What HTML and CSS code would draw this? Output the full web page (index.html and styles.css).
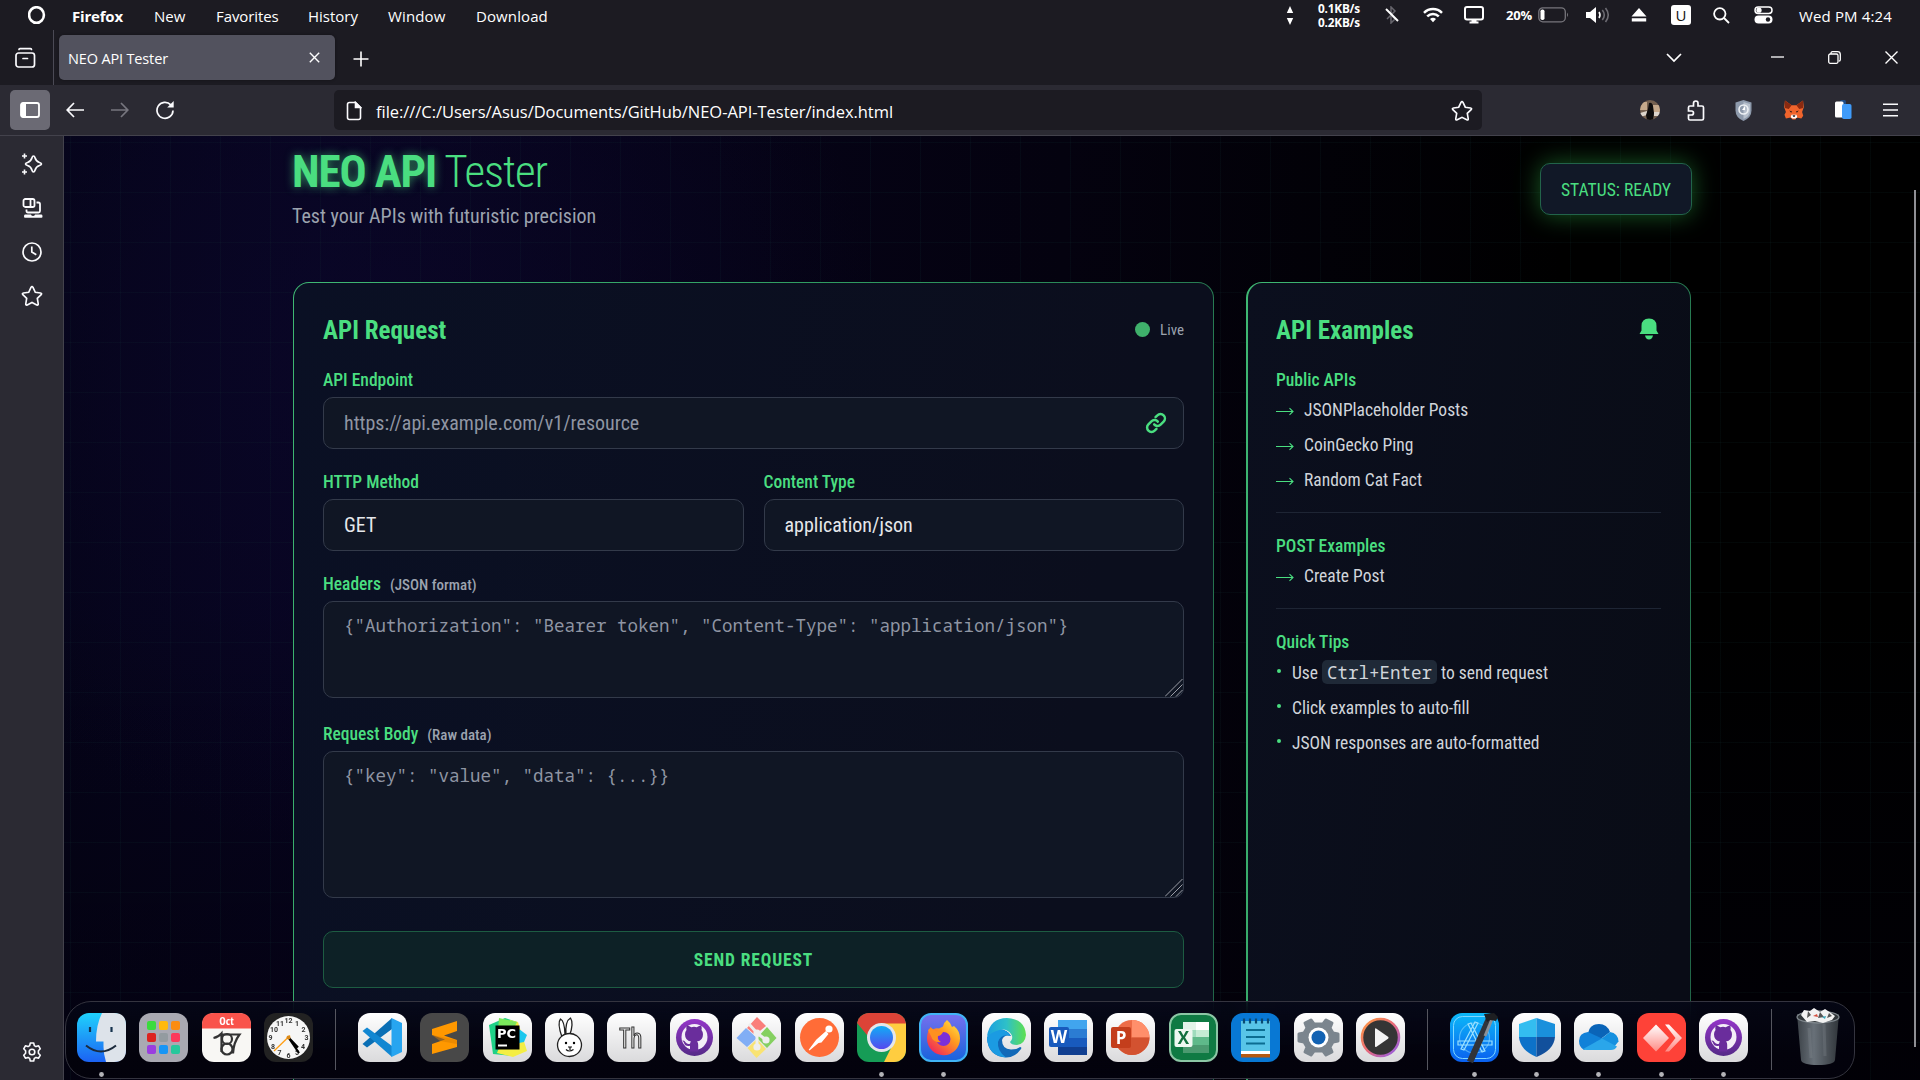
FILE: index.html
```html
<!DOCTYPE html>
<html lang="en">
<head>
<meta charset="utf-8">
<title>NEO API Tester</title>
<link rel="stylesheet" href="styles.css">
</head>
<body>
<header class="menubar">
  <svg class="logo" width="18" height="20" viewBox="0 0 18 20"><ellipse cx="8.500" cy="9" rx="7.4" ry="7.8" fill="none" stroke="#fff" stroke-width="2.6"/></svg>
  <nav class="menus"><b class="m1">Firefox</b><span class="m2">New</span><span class="m3">Favorites</span><span class="m4">History</span><span class="m5">Window</span><span class="m6">Download</span></nav>
  <div class="tray">
    <svg class="t-arrows" width="8" height="20" viewBox="0 0 8 20" fill="#fff"><path d="M4 1l3.200 7H.8zM4 20l3.200-7H.8z"/></svg>
    <div class="speed"><span>0.1KB/s</span><span>0.2KB/s</span></div>
    <svg class="t-bt" width="14" height="18" viewBox="0 0 14 18" fill="none"><path d="M2 13l8-8-4-4v16l4-4-3-3" stroke="#66656c" stroke-width="1.5"/><path d="M1 3l12 12" stroke="#fff" stroke-width="1.9"/></svg>
    <svg class="t-wifi" width="20" height="16" viewBox="0 0 20 16" fill="none" stroke="#fff" stroke-width="2.5"><path d="M1 5.8c5-5 13-5 18 0M4.2 9.4c3.4-3.3 8.200-3.3 11.600 0"/><path d="M7 12a4.500 4.500 0 0 1 6 0l-3 3.300z" fill="#fff" stroke="none"/></svg>
    <svg class="t-mon" width="20" height="18" viewBox="0 0 20 18"><rect x="1" y="1" width="18" height="12.500" rx="2" fill="none" stroke="#fff" stroke-width="2"/><path d="M7.500 13h5v2.500h2V17.500h-9v-2h2z" fill="#fff"/></svg>
    <b class="pct">20%</b>
    <svg class="t-bat" width="32" height="16" viewBox="0 0 32 16"><rect x=".8" y=".8" width="26.500" height="14" rx="4" fill="none" stroke="#77767c" stroke-width="1.300"/><rect x="2.500" y="2.500" width="4" height="10.600" rx="1.800" fill="#fff"/><path d="M29 5.500q2 2.300 0 4.600z" fill="#77767c"/></svg>
    <svg class="t-vol" width="24" height="16" viewBox="0 0 24 16" fill="none"><path d="M0 5h4l6-5v16l-6-5H0z" fill="#fff"/><path d="M13 5q2 3 0 6" stroke="#fff" stroke-width="1.600"/><path d="M16.300 3q4 5 0 10M19.500 1q5.500 7 0 14" stroke="#6c6b72" stroke-width="1.600"/></svg>
    <svg class="t-ej" width="16" height="14" viewBox="0 0 16 14" fill="#fff"><path d="M8 0l7.500 8.500H.5zM.8 10.300h14.400v3.200H.8z"/></svg>
    <span class="ubox">U</span>
    <svg class="t-find" width="17" height="17" viewBox="0 0 17 17" fill="none" stroke="#fff" stroke-width="1.800"><circle cx="6.800" cy="6.800" r="5.700"/><path d="M11 11l5 5"/></svg>
    <svg class="t-cc" width="19" height="18" viewBox="0 0 19 18"><rect x="1" y="1" width="17" height="6.500" rx="3.200" fill="none" stroke="#fff" stroke-width="1.500"/><circle cx="5" cy="4.200" r="2.600" fill="#fff"/><rect x=".5" y="9.500" width="18" height="8" rx="4" fill="#fff"/><circle cx="14" cy="13.500" r="2.200" fill="#1c1b22"/></svg>
    <span class="time">Wed PM 4:24</span>
  </div>
</header>
<div class="tabs">
  <div class="view"><svg width="22" height="22" viewBox="0 0 22 22" fill="none" stroke="#fbfbfe" stroke-width="1.700" stroke-linecap="round"><rect x="2" y="6" width="18.500" height="14" rx="2.500"/><path d="M5 2.500q0-.8 1-.8h10.500q1 0 1 .8M9 11.500h4.500"/></svg></div>
  <div class="tab"><span>NEO API Tester</span><svg width="11" height="11" viewBox="0 0 11 11" stroke="#fff" stroke-width="1.400"><path d="M.8.8l9.400 9.400M10.200.8L.8 10.200"/></svg></div>
  <svg class="plus" width="16" height="16" viewBox="0 0 16 16" stroke="#fff" stroke-width="1.600"><path d="M8 .5v15M.5 8h15"/></svg>
  <div class="winbtns">
    <svg width="16" height="10" viewBox="0 0 16 10" fill="none" stroke="#fff" stroke-width="1.700"><path d="M1 1l7 7 7-7"/></svg>
    <svg class="min" width="13" height="13" viewBox="0 0 13 13" stroke="#fff" stroke-width="1.300"><path d="M0 6h13"/></svg>
    <svg class="rest" width="13" height="13" viewBox="0 0 13 13" fill="none" stroke="#fff" stroke-width="1.300"><rect x=".7" y="3" width="9.300" height="9.300" rx="1.500"/><path d="M3 3V2.300Q3 .7 4.500.7h5q2.800 0 2.800 2.800v5.200q0 1.300-1.500 1.500"/></svg>
    <svg class="cls" width="13" height="13" viewBox="0 0 13 13" stroke="#fff" stroke-width="1.400"><path d="M.5.5l12 12M12.500.5l-12 12"/></svg>
  </div>
</div>
<div class="toolbar">
  <div class="sidebtn"><svg width="20" height="16" viewBox="0 0 20 16"><rect x="1" y="1" width="18" height="14" rx="2" fill="none" stroke="#fff" stroke-width="1.800"/><path d="M1 2h5v12H1z" fill="#fff"/></svg></div>
  <svg class="back" width="18" height="16" viewBox="0 0 18 16" fill="none" stroke="#fbfbfe" stroke-width="1.700"><path d="M18 8H1.500M8 1L1.200 8 8 15"/></svg>
  <svg class="fwd" width="18" height="16" viewBox="0 0 18 16" fill="none" stroke="#77767f" stroke-width="1.700"><path d="M0 8h16.500M10 1l6.800 7L10 15"/></svg>
  <svg class="reload" width="20" height="20" viewBox="0 0 20 20" fill="none" stroke="#fbfbfe" stroke-width="1.700"><path d="M15.800 4.800A8 8 0 1 0 18 10.500"/><path d="M18.700 1v6.500h-6.500z" fill="#fbfbfe" stroke="none"/></svg>
  <div class="url">
    <svg width="16" height="20" viewBox="0 0 16 20" fill="none" stroke="#fbfbfe" stroke-width="1.600"><path d="M3.500 1.500h6l5 5v10q0 2-2 2h-9q-2 0-2-2v-13q0-2 2-2z"/><path d="M9.500 1.500v5h5z" fill="#fbfbfe"/></svg>
    <span>file:///C:/Users/Asus/Documents/GitHub/NEO-API-Tester/index.html</span>
    <svg class="star" width="22" height="21" viewBox="0 0 24 23"><use href="#star"/></svg>
  </div>
  <div class="exts">
    <svg width="20" height="20" viewBox="0 0 20 20"><clipPath id="pc"><circle cx="10" cy="10" r="10"/></clipPath><g clip-path="url(#pc)"><path fill="#75604f" d="M0 0h20v20H0z"/><path fill="#c6a98b" d="M0 2h7v8H0zM13 5h7v7h-7z"/><path fill="#ddd5cb" d="M0 13l7-2v4l-7 2zM14 12h6v4h-6z"/><path fill="#0e0c0c" d="M9 3q3-1 4 3l1 7-1 7H7l-1-5 2-6z"/></g></svg>
    <svg class="e2" width="18" height="21" viewBox="0 0 18 21" fill="none" stroke="#fbfbfe" stroke-width="1.700"><path d="M6.500 6V3.500q0-2.500 2.300-2.500T11 3.500V6h4q1.500 0 1.500 1.500V18.500q0 1.500-1.500 1.500H3q-1.500 0-1.500-1.500V15h3q2 0 2-2t-2-2h-3V7.500Q1.500 6 3 6z"/></svg>
    <svg class="e3" width="17" height="21" viewBox="0 0 17 21"><path d="M8.500 0l8 2.500v8q0 7-8 10.500-8-3.500-8-10.500v-8z" fill="#8e9aac"/><path d="M8.500 2L15 4v7q0 5-6.500 8z" fill="#b7c0cd"/><circle cx="8.500" cy="9.500" r="4.500" fill="none" stroke="#eef1f5" stroke-width="1.600"/><path d="M7 10l3-4v4z" fill="#fff"/></svg>
    <svg class="e4" width="20" height="20" viewBox="0 0 21 20"><path fill="#f0642c" d="M1 0l7 5h5l7-5 .8 7-1.800 5 1.200 4-2 3-5-1.200L12 20H9l-2.200-2.200L2 19l-1.500-4L2 12 .2 7z"/><path fill="#8b2a10" d="M1 0l7 5-3 4-4-1zM20 0l-7 5 3 4 4-1z"/><path fill="#fff" d="M8 15h5l1 2.500-2 1.500H9l-2-1.500z"/><path fill="#2a1a18" d="M5.500 10.500l3 1-1 1.500zM15.500 10.500l-3 1 1 1.500zM9 15.500h3l-.5 1.500h-2z"/></svg>
    <svg class="e5" width="17" height="20" viewBox="0 0 17 20"><rect x="5" y="0" width="6" height="5" rx="1.500" fill="#1d4a86"/><rect x="0" y="1.500" width="8.500" height="16" rx="1.500" fill="#fff"/><rect x="7" y="4" width="9.500" height="15" rx="1.800" fill="#3f9bfa"/></svg>
    <svg class="e6" width="17" height="14" viewBox="0 0 17 14" stroke="#fbfbfe" stroke-width="1.600"><path d="M1 1.200h15M1 7h15M1 12.800h15"/></svg>
  </div>
</div>
<div class="main">
  <aside class="side">
    <svg width="22" height="22" viewBox="0 0 22 22" fill="none" stroke="#fbfbfe" stroke-width="1.700" stroke-linejoin="round"><path d="M12.500 3q1 0 1.500 1.800.9 3.500 4.500 4.700 2 .6 2 1.500t-2 1.500q-3.600 1.200-4.500 4.700Q13.500 19 12.500 19T11 17.200q-.9-3.500-4.500-4.700-2-.6-2-1.500t2-1.500Q10.100 8.300 11 4.800 11.500 3 12.500 3z"/><path d="M3.500.5v5M1 3h5M3.500 16.500v5M1 19h5" stroke-width="1.600"/></svg>
    <svg width="22" height="22" viewBox="0 0 22 22" fill="none" stroke="#fbfbfe" stroke-width="1.800"><rect x="2.500" y="2" width="11" height="8" rx="1.800"/><path d="M9.500 2v8M15.500 5.500h1.800q1.700 0 1.700 1.800V14q0 1.500-1.500 1.500H7Q5.500 15.500 5.500 14v-1.500"/><path d="M4 17.500h6q0 1.400 2 1.400t2-1.400h6.500q1 0 1 2 0 1.300-1 1.300H4q-1 0-1-1.300 0-2 1-2z" fill="#fbfbfe" stroke="none"/></svg>
    <svg width="22" height="22" viewBox="0 0 22 22" fill="none" stroke="#fbfbfe" stroke-width="1.700"><circle cx="11" cy="11" r="9"/><path d="M10.800 5.500V11l4.500 2.700"/></svg>
    <svg width="22" height="22" viewBox="0 0 24 24"><path id="star" d="M12 1.800q.7 0 1.100.9l2.500 5.200 5.700.8q1.900.4.700 1.900l-4.200 4 1 5.900q.2 1.900-1.600 1.200L12 19l-5.200 2.700q-1.800.7-1.600-1.200l1-5.900-4.200-4Q.8 9.100 2.700 8.700l5.700-.8 2.500-5.200q.4-.9 1.100-.9z" fill="none" stroke="#fbfbfe" stroke-width="1.800"/></svg>
    <svg class="gear" width="20" height="20" viewBox="0 0 20 20" fill="none" stroke="#fbfbfe" stroke-width="1.600" stroke-linejoin="round"><path d="M8.300 1h3.400l.6 2.600 1.700 1 2.600-.8 1.700 3-1.900 1.900v2.600l1.900 1.900-1.700 3-2.600-.8-1.700 1-.6 2.600H8.300l-.6-2.600-1.700-1-2.600.8-1.700-3 1.900-1.900V8.700L1.700 6.800l1.700-3 2.600.8 1.700-1z"/><circle cx="10" cy="10" r="2.800"/></svg>
  </aside>
  <div class="page">
    <div class="wrap">
      <div class="hero">
        <div><h1><b>NEO API</b> <span>Tester</span></h1><p>Test your APIs with futuristic precision</p></div>
        <div class="status">STATUS: READY</div>
      </div>
      <div class="cols">
        <section class="card req">
          <div class="head"><h2>API Request</h2><span class="live"><i></i>Live</span></div>
          <div class="field"><label>API Endpoint</label>
            <div class="holder"><input class="box" placeholder="https://api.example.com/v1/resource">
              <svg class="link" width="22" height="22" viewBox="0 0 24 24" fill="none" stroke="#4ade80" stroke-width="2.700" stroke-linecap="round"><path d="M10 13.500a4.800 4.800 0 0 0 7 .3l3.300-3.300a4.700 4.700 0 0 0-6.800-6.800L11.500 5.600"/><path d="M14 10.500a4.800 4.800 0 0 0-7-.3l-3.300 3.300a4.700 4.700 0 0 0 6.800 6.800l2-1.900"/></svg></div></div>
          <div class="two">
            <div class="field"><label>HTTP Method</label><select class="box"><option>GET</option></select></div>
            <div class="field"><label>Content Type</label><select class="box"><option>application/json</option></select></div>
          </div>
          <div class="field big"><label>Headers <small>(JSON format)</small></label>
            <div class="holder"><textarea class="box area a1" placeholder='{"Authorization": "Bearer token", "Content-Type": "application/json"}'></textarea><svg class="grip" width="18" height="18" viewBox="0 0 18 18" stroke="#9a9ca5" stroke-width="1"><path d="M0 17.500L17.500 0M5.500 17.500l12-12M11 17.500l6.500-6.500"/></svg></div></div>
          <div class="field big"><label>Request Body <small>(Raw data)</small></label>
            <div class="holder"><textarea class="box area a2" placeholder='{"key": "value", "data": {...}}'></textarea><svg class="grip" width="18" height="18" viewBox="0 0 18 18" stroke="#9a9ca5" stroke-width="1"><path d="M0 17.500L17.500 0M5.500 17.500l12-12M11 17.500l6.500-6.500"/></svg></div></div>
          <button class="send">SEND REQUEST</button>
        </section>
        <section class="card ex">
          <div class="head"><h2>API Examples</h2><svg width="20" height="22" viewBox="0 0 20 22" fill="#4ade80"><path d="M10 .5q7.500 0 7.500 7.500v4.500L19.500 16H.5l2-3.500V8q0-7.500 7.500-7.500zM6 17.500h8q-.8 4-4 4t-4-4z"/></svg></div>
          <h3>Public APIs</h3>
          <ul class="arrows">
            <li><svg width="18" height="10" viewBox="0 0 18 10"><use href="#arr"/></svg>JSONPlaceholder Posts</li>
            <li><svg width="18" height="10" viewBox="0 0 18 10"><path id="arr" d="M0 5.500h17M13.500 2.200L17 5.500l-3.500 3.300" fill="none" stroke="#4ade80" stroke-width="1.100"/></svg>CoinGecko Ping</li>
            <li><svg width="18" height="10" viewBox="0 0 18 10"><use href="#arr"/></svg>Random Cat Fact</li>
          </ul>
          <hr>
          <h3>POST Examples</h3>
          <ul class="arrows"><li><svg width="18" height="10" viewBox="0 0 18 10"><use href="#arr"/></svg>Create Post</li></ul>
          <hr>
          <h3>Quick Tips</h3>
          <ul class="dots"><li><i></i><span>Use <code>Ctrl+Enter</code> to send request</span></li><li><i></i>Click examples to auto-fill</li><li><i></i>JSON responses are auto-formatted</li></ul>
        </section>
      </div>
    </div>
  </div>
</div>
<div class="scroll"></div>

<svg width="0" height="0" class="defs">
  <defs>
    <linearGradient id="wh" x2="0" y2="1"><stop stop-color="#fff"/><stop offset="1" stop-color="#dadadc"/></linearGradient>
    <linearGradient id="fin" x2="0" y2="1"><stop stop-color="#1fd2fc"/><stop offset="1" stop-color="#1c62f3"/></linearGradient>
    <linearGradient id="ffb" x2="0" y2="1"><stop stop-color="#7770ee"/><stop offset="1" stop-color="#1763dc"/></linearGradient>
    <linearGradient id="flame" x1="1" x2=".2" y2="1"><stop stop-color="#fff04a"/><stop offset=".45" stop-color="#ff9a1f"/><stop offset="1" stop-color="#f0215d"/></linearGradient>
    <linearGradient id="edg" y2="0"><stop stop-color="#1a9fe0"/><stop offset=".5" stop-color="#2ec0c8"/><stop offset="1" stop-color="#5fe04e"/></linearGradient>
    <linearGradient id="pur" x2="0" y2="1"><stop stop-color="#9435c8"/><stop offset="1" stop-color="#552a88"/></linearGradient>
    <linearGradient id="cb" x2="0" y2="1"><stop stop-color="#10adf6"/><stop offset="1" stop-color="#5548ef"/></linearGradient>
    <linearGradient id="xc" x2="0" y2="1"><stop stop-color="#0bb9f8"/><stop offset="1" stop-color="#0a60f0"/></linearGradient>
    <linearGradient id="ring" x2="1" y2="1"><stop stop-color="#ff9a3e"/><stop offset=".5" stop-color="#e86a7a"/><stop offset="1" stop-color="#8b5cf0"/></linearGradient>
    <linearGradient id="can" y2="0"><stop stop-color="#3c4248"/><stop offset=".4" stop-color="#687078"/><stop offset="1" stop-color="#30353a"/></linearGradient>
    <linearGradient id="any" x2="0" y2="1"><stop stop-color="#fff"/><stop offset="1" stop-color="#ff8b85"/></linearGradient>
    <symbol id="base" viewBox="0 0 49 49"><rect width="49" height="49" rx="12" fill="url(#wh)"/></symbol>
    <symbol id="gh" viewBox="0 0 49 49"><rect width="49" height="49" rx="12" fill="url(#wh)"/><circle cx="24.500" cy="24.500" r="18.500" fill="url(#pur)"/><circle cx="24.500" cy="24" r="13" fill="#f3eef7"/><path d="M20 38.500v-5.800q-5 1-6-3-.7-1.300-1.700-2 2-.6 3.400 1.800 1.500 2 4.300 1.200.2-1.500 1-2.200-6-1-6-7.300 0-2.500 1.500-4.200-.6-2 .3-4.600 2 0 4.500 1.800 2.700-.8 5.400 0 2.500-1.800 4.500-1.800.9 2.600.3 4.600 1.500 1.700 1.500 4.200 0 6.300-6 7.300 1.200 1 1.200 3.200v6.800z" fill="#6a2d9c"/></symbol>
    <circle id="run" cx="24.500" cy="61.500" r="2.400" fill="#b4b4b8"/>
  </defs>
</svg>
<div class="dock">
  <svg viewBox="0 0 49 49"><rect width="49" height="49" rx="12" fill="url(#fin)"/><path d="M25 0h12q12 0 12 12v25q0 12-12 12h-8q-2.500-8-2.500-15v-5.500H19Q19 12 25 0z" fill="#dde3ea"/><path d="M13 14v5M34.500 14v5" stroke="#15324e" stroke-width="2.200"/><path d="M9 32.500q15 12 30 0" fill="none" stroke="#1c2b3d" stroke-width="2"/><use href="#run"/></svg>
  <svg viewBox="0 0 49 49"><rect width="49" height="49" rx="12" fill="#a9a9b2"/><rect x="8" y="8" width="9" height="9" rx="2" fill="#3bdb3d"/><rect x="20" y="8" width="9" height="9" rx="2" fill="#ffb90c"/><rect x="32" y="8" width="9" height="9" rx="2" fill="#fb8c12"/><rect x="8" y="20" width="9" height="9" rx="2" fill="#dc221f"/><rect x="20" y="20" width="9" height="9" rx="2" fill="#939ba0"/><rect x="32" y="20" width="9" height="9" rx="2" fill="#fb3a5c"/><rect x="8" y="32" width="9" height="9" rx="2" fill="#9a3ee0"/><rect x="20" y="32" width="9" height="9" rx="2" fill="#1795f5"/><rect x="32" y="32" width="9" height="9" rx="2" fill="#27c79c"/></svg>
  <svg viewBox="0 0 49 49"><rect width="49" height="49" rx="12" fill="#f8f7f4"/><path d="M0 15.500V12Q0 0 12 0h25q12 0 12 12v3.500z" fill="#f9534b"/><text x="24.500" y="12" text-anchor="middle" class="cal">Oct</text><g fill="none" stroke="#333" stroke-width="2.200"><path d="M11.500 25q5-1 8-4.500v18.500"/><circle cx="25" cy="26" r="5"/><circle cx="25" cy="36" r="5.500"/><path d="M20 21.500h17.500q-6 8-6.500 19"/></g></svg>
  <svg viewBox="0 0 49 49"><rect width="49" height="49" rx="12" fill="#222"/><circle cx="24.500" cy="24.500" r="21.500" fill="#f6f6f6"/><g class="clk" text-anchor="middle"><text x="24.500" y="10">12</text><text x="33" y="12.500">1</text><text x="39.500" y="18.500">2</text><text x="42.500" y="27">3</text><text x="39" y="36">4</text><text x="33" y="42">5</text><text x="24.500" y="45">6</text><text x="15.500" y="42">7</text><text x="9" y="36">8</text><text x="6.500" y="27">9</text><text x="10" y="18.500">10</text><text x="16" y="12.500">11</text></g><path d="M24.500 24.500l9.500 10M24.500 24.500L35 40" stroke="#000" stroke-width="2.200"/><path d="M26 22.500L10 38" stroke="#ff9d13" stroke-width="1.300"/><circle cx="24.500" cy="24.500" r="2" fill="#d98a1c"/></svg>
  <span class="sep"></span>
  <svg viewBox="0 0 49 49"><use href="#base"/><path d="M34 5v11L9 34.500l-4.500-3.500z" fill="#0a6fb5"/><path d="M34 44V33L9 14.500 4.500 18z" fill="#1287d2"/><path d="M33.500 5L44 10v29l-10.500 5z" fill="#27a5f0"/></svg>
  <svg viewBox="0 0 49 49"><rect width="49" height="49" rx="12" fill="#484848"/><path d="M37 8v10l-13 4.500 13 4.500v7L12 41V31l13-4.500L12 22v-6z" fill="#ff9800"/><path d="M12 22l25 5v4L20 28z" fill="#d97c00" opacity=".5"/></svg>
  <svg viewBox="0 0 49 49"><use href="#base"/><path fill="#1fd187" d="M6 12L22 5l12 4-4 34-20-2z"/><path fill="#f4ee44" d="M27 7l8 2 9 29-14 6-16-4z"/><path fill="#1bc7ee" d="M36 16l8 6-3 7-5 1z"/><path fill="#7be85c" d="M16 5l18 4-3 6-16 2z"/><path d="M12.500 12.500h24v24h-24z"/><text x="14" y="25" class="pyc">PC</text><path d="M15 31.500h9v2h-9z" fill="#fff"/></svg>
  <svg viewBox="0 0 49 49"><use href="#base"/><g fill="#fff" stroke="#222" stroke-width="1.300"><path d="M17 24Q12 10 15.500 6q4 2 4.500 15zM21 22Q20 8 25.500 5q3.500 5-1 18z"/><ellipse cx="24.500" cy="32" rx="12" ry="11.500"/></g><circle cx="21" cy="30" r="1.200"/><circle cx="29" cy="30" r="1.200"/><path d="M25 34v3M21 36.500q3 3 7.500 0M23 34h4" fill="none" stroke="#111" stroke-width="1.200"/></svg>
  <svg viewBox="0 0 49 49"><use href="#base"/><text x="24" y="35" text-anchor="middle" class="th">Th</text></svg>
  <svg viewBox="0 0 49 49"><use href="#gh"/></svg>
  <svg viewBox="0 0 49 49"><use href="#base"/><path fill="#fa7e7a" d="M25 4l9 9-11 9-8-7z"/><path fill="#81aef5" d="M14 15l11 10-10 9L4.500 25z"/><path fill="#85d060" d="M35 14l9.500 11L35 35l-10-10z"/><path fill="#f9e373" d="M25 26l9 10-9.500 9-9-10z"/><path d="M17 11l8 9v16M25 20l9 7" fill="none" stroke="#eee" stroke-width="3"/><g fill="#eee"><circle cx="25" cy="20" r="3.600"/><circle cx="25" cy="34" r="3.600"/><circle cx="34" cy="27" r="3.600"/></g></svg>
  <svg viewBox="0 0 49 49"><use href="#base"/><circle cx="24.500" cy="24.500" r="19.500" fill="#ff6c37"/><circle cx="34" cy="16" r="3.600" fill="#fff"/><path d="M31 18l2.500 3-7 8.500-3 .5-9 7.500-.8-.8 7.500-10z" fill="#fff"/></svg>
  <svg viewBox="0 0 49 49"><clipPath id="cc"><rect width="49" height="49" rx="12"/></clipPath><g clip-path="url(#cc)"><path fill="#169c56" d="M0 0h49v49H0z"/><path fill="#ffcd40" d="M24 10h25v39H27l9-18z"/><path fill="#dc4337" d="M0 0h49v10.500H24L15 28 0 10z"/></g><circle cx="24.500" cy="24.500" r="14.500" fill="#e4e6ea"/><circle cx="24.500" cy="24.500" r="11.500" fill="url(#cb)"/><use href="#run"/></svg>
  <svg viewBox="0 0 49 49"><rect x="1" y="1" width="47" height="47" rx="11" fill="url(#ffb)" stroke="#41b4f5" stroke-width="2"/><path fill="url(#flame)" d="M28 7q4 3 5 7l2-1q6 5 6 12.500A16.500 16.500 0 0 1 8 26q0-7 3.500-12l2.500 2.500q3-2 6-1l4-2q1-4.500 4-6.500z"/><circle cx="24.500" cy="26" r="7" fill="#7a2fd8"/><path fill="#ff9020" d="M9 17l3-2 5 3 7 1q-2 4-5 4-1 4 3 6-8 1-10-6z"/><use href="#run"/></svg>
  <svg viewBox="0 0 49 49"><use href="#base"/><path fill="#1169b8" d="M5 25q2-9 12-9 9 1 12 7-7-2-9 4 0 9 9 9.500 6 0 9-2.500 2 0 1 2-6 8.500-14.500 8.500Q6 43.500 5 25z"/><path fill="#1b9be2" d="M5 25q2-9 12-9 9 1 12 7-10-3-13 6-1 9 8 15.500Q6 43 5 25z"/><path fill="url(#edg)" d="M5 23Q8 5 25 5q18 1 19 17-1 9-9 10-6 0-7-3 4-4 1-8Q22 11 5 23z"/></svg>
  <svg viewBox="0 0 49 49"><use href="#base"/><path fill="#41a5ee" d="M14 7h29v9H14z"/><path fill="#2b7cd3" d="M14 16h29v9H14z"/><path fill="#185abd" d="M14 25h29v9H14z"/><path fill="#103f91" d="M14 34h29v8H14z"/><rect x="5" y="14" width="20" height="20" rx="2" fill="#185abd"/><text x="15" y="30" text-anchor="middle" class="off">W</text></svg>
  <svg viewBox="0 0 49 49"><use href="#base"/><circle cx="26" cy="24.500" r="17.500" fill="#ed6c47"/><path fill="#ff8f6b" d="M26 7a17.500 17.500 0 0 1 17.500 17.500H26z"/><path fill="#d35230" d="M43.500 24.500a17.500 17.500 0 0 1-35 0z"/><rect x="5" y="14" width="20" height="21" rx="2" fill="#c43e1c"/><text x="15" y="30.500" text-anchor="middle" class="off">P</text></svg>
  <svg viewBox="0 0 49 49"><rect x="1" y="1" width="47" height="47" rx="11" fill="#0f7a43" stroke="#8cc7a5" stroke-width="2"/><path fill="#e3f4e9" d="M14 9h13v8H14z"/><path fill="#fff" d="M27 9h13v8H27z"/><path fill="#9fdcbd" d="M14 17h26v7H14z"/><path fill="#c6ecd5" d="M27 17h13v7H27z"/><path fill="#5fb98a" d="M14 24h26v8H14z"/><path fill="#4b9a70" d="M14 32h26v8H14z"/><rect x="5.500" y="16" width="18" height="18" rx="2" fill="#eef8f1"/><text x="14.500" y="31" text-anchor="middle" class="off xl">X</text></svg>
  <svg viewBox="0 0 49 49"><rect width="49" height="49" rx="12" fill="#0878d4"/><path fill="#58c5e8" d="M10 8h29v32H10z"/><path fill="#fff" d="M10 38h29v3H10z"/><path fill="#b55a13" d="M10 41h29v3.500H10z"/><path d="M15 17h19M15 24h19M15 30.500h19" stroke="#0b6d91" stroke-width="2"/><path d="M13 5.500v5M19 5.500v5M25 5.500v5M31 5.500v5M37 5.500v5" stroke="#0a4a72" stroke-width="2.200"/></svg>
  <svg viewBox="0 0 49 49"><use href="#base"/><path fill="#7b858e" stroke="#7b858e" stroke-width="3" stroke-linejoin="round" d="M20 11l-3-4-6 3 2 5-3 5-5 1v7l5 1 3 5-2 5 6 3 3-4h9l3 4 6-3-2-5 3-5 5-1v-7l-5-1-3-5 2-5-6-3-3 4z"/><circle cx="24.500" cy="24.500" r="10" fill="#fff"/><circle cx="24.500" cy="24.500" r="7" fill="#1262b3"/></svg>
  <svg viewBox="0 0 49 49"><use href="#base"/><circle cx="24.500" cy="24.500" r="18.500" fill="#353535" stroke="url(#ring)" stroke-width="2.500"/><path fill="#f4f4f4" d="M19 16.500q0-1.800 1.500-.8l11.500 8q1.300 1 0 2l-11.500 8q-1.500 1-1.500-.8z"/></svg>
  <span class="sep"></span>
  <svg viewBox="0 0 49 49"><rect width="49" height="49" rx="12" fill="url(#xc)"/><rect x="3.500" y="3.500" width="42" height="42" rx="9" fill="none" stroke="#7fd8ff" stroke-width="1"/><g fill="none" stroke="#9ae0ff" stroke-width="1.200"><circle cx="24.500" cy="25" r="15" opacity=".5"/><path d="M21 10l14 28-3 1-14-28zM28 10L14 37l-3-1L25 9zM8 28h34v4H8z"/></g><path d="M39 6L20 49" stroke="#31343a" stroke-width="6.500"/><path d="M42 6l-7 17" stroke="#8b9097" stroke-width="3"/><path fill="#1e1f22" d="M34 1l10-1 4 4-2 4-6-1-3 2z"/><use href="#run"/></svg>
  <svg viewBox="0 0 49 49"><use href="#base"/><path fill="#33bdf0" d="M24.500 5L7 11v13h17.500z"/><path fill="#1a90dc" d="M24.500 5L43 11v13H24.500z"/><path fill="#0d72c9" d="M7 24q1 13 17.500 20V24z"/><path fill="#12509c" d="M43 24q-1 13-18.500 20V24z"/><use href="#run"/></svg>
  <svg viewBox="0 0 49 49"><use href="#base"/><path fill="#0a64b8" d="M14 20q2-9 11-9 8 0 11 8l-12 9z"/><path fill="#1181d8" d="M5 28q0-8 9-9l15 7-19 11q-5-3-5-9z"/><path fill="#1590df" d="M27 26l9-7q8 1 8.500 9.500L40 34z"/><path fill="#2aa6ea" d="M9 36l19-10.500 15 8q-2 3.500-6 3.500H13q-3 0-4-1z"/><use href="#run"/></svg>
  <svg viewBox="0 0 49 49"><rect width="49" height="49" rx="12" fill="#fe4238"/><path fill="url(#any)" d="M19 11.500L32 25 19 38.500 6 25zM28 11.500h4L45 25 32 38.500h-4L38.500 25z"/><use href="#run"/></svg>
  <svg viewBox="0 0 49 49"><use href="#gh"/><use href="#run"/></svg>
  <span class="sep s3"></span>
  <svg class="trash" viewBox="0 0 44 58"><path d="M1 6l4 46q1 5 17 5t17-5l4-46z" fill="url(#can)"/><path d="M13 20l2 30M28 16l1 32" stroke="#8b9298" stroke-width="3" opacity=".25"/><ellipse cx="22" cy="9" rx="21" ry="6" fill="#31363a" stroke="#7e868c" stroke-width="1.300"/><path fill="#f2f2f2" d="M5 7l3-5 6 1 4-3 6 4 5-3 6 4 4 3-3 4-9 3-8-2-8 1z"/><path fill="#555" d="M12 3l3 4-4 3zM24 4l4 5-6 1zM33 5l3 3-5 2z"/><path fill="#d5503f" d="M17 8l4-2 1 3z"/><path fill="#39a6ba" d="M26 9l4-1-1 3z"/></svg>
</div>
</body>
</html>
```
FILE: styles.css
```css
* { box-sizing: border-box; }
html, body { margin: 0; height: 100%; overflow: hidden; }
body { width: 1920px; height: 1080px; display: flex; flex-direction: column; position: relative; background: #000; color: #fff; font-family: "Open Sans", "Noto Sans", sans-serif; font-size: 15px; }
svg { display: block; flex: none; }
.defs { position: absolute; }

/* system menu bar */
.menubar { height: 30px; background: #1c1b22; display: flex; align-items: center; padding: 2px 26px 0 28px; line-height: 28px; white-space: nowrap; }
.menus { display: flex; gap: 30px; margin-left: 26px; }
.m1 { width: 52px; letter-spacing: -.2px; } .m2 { width: 32px; } .m3 { width: 62px; letter-spacing: -.1px; } .m4 { width: 50px; } .m5 { width: 58px; letter-spacing: .15px; } .m6 { width: 71px; letter-spacing: .1px; }
.tray { margin-left: auto; display: flex; align-items: center; }
.tray > svg { margin-top: -2px; }
.speed { display: flex; flex-direction: column; width: 44px; margin: -2px 23px 0 24px; font-size: 11.800px; font-weight: 700; line-height: 14px; letter-spacing: -.2px; }
.tray .t-wifi { margin-left: 24px; } .tray .t-mon { margin-left: 21px; }
.pct { font-size: 13px; width: 27px; margin: -2px 5px 0 22px; letter-spacing: -.2px; }
.tray .t-vol { margin-left: 16px; } .tray .t-ej { margin-left: 21px; }
.ubox { width: 20px; height: 20px; border-radius: 3px; background: #fff; color: #111; line-height: 20px; text-align: center; margin: -2px 22px 0 24px; font-size: 15px; }
.tray .t-cc { margin: -2px 26px 0 24px; }
.time { width: 95px; letter-spacing: .15px; }

/* tab strip */
.tabs { height: 55px; background: #1c1b22; display: flex; align-items: center; padding-right: 22px; }
.view { width: 54px; height: 55px; border-right: 1px solid #4b4a55; padding: 17px 0 0 14px; }
.tab { width: 276px; height: 45px; margin: 0 0 0 5px; border-radius: 5px; background: #52525e; display: flex; align-items: center; justify-content: space-between; padding: 0 15px 0 10px; box-shadow: 0 0 3px #0006; }
.tab span { font-size: 14.500px; letter-spacing: -.15px; margin: 1px 0 0 -1px; }
.plus { margin: 2px 0 0 18px; }
.winbtns { margin-left: auto; display: flex; align-items: center; }
.min { margin-left: 89px; } .rest { margin-left: 44px; } .cls { margin-left: 44px; }

/* navigation toolbar */
.toolbar { height: 51px; background: #2b2a33; border-bottom: 1px solid #43424c; display: flex; align-items: center; padding: 0 21px 0 10px; }
.sidebtn { width: 40px; height: 40px; border-radius: 5px; background: #6b6a74; display: flex; align-items: center; justify-content: center; }
.back { margin-left: 16px; } .fwd { margin-left: 27px; } .reload { margin-left: 26px; }
.url { width: 1148px; height: 40px; margin-left: 159px; border-radius: 5px; background: #1c1b22; display: flex; align-items: center; padding: 1px 9px 0 12px; font-size: 16.500px; letter-spacing: -.04px; }
.url span { margin: 2px 0 0 14px; } .star { margin-left: auto; }
.exts { margin-left: auto; display: flex; align-items: center; }
.e2 { margin-left: 27px; } .e3 { margin-left: 30px; } .e4 { margin-left: 32px; } .e5 { margin-left: 31px; } .e6 { margin-left: 30px; }

.main { flex: 1; min-height: 0; display: flex; }
.side { width: 64px; background: #2b2a33; border-right: 1px solid #43424c; display: flex; flex-direction: column; align-items: center; gap: 22px; padding: 17px 0 18px; }
.gear { margin-top: auto; }

/* tested page */
.page { flex: 1; overflow: hidden; background:
  linear-gradient(rgba(22,60,60,.13) 1px, transparent 1px) 0 6px / 50px 50px,
  linear-gradient(90deg, rgba(22,60,60,.13) 1px, transparent 1px) 6px 0 / 50px 50px,
  radial-gradient(circle 500px at 320px 220px, rgba(12,8,44,.6), transparent),
  linear-gradient(transparent 50%, rgba(2,0,10,.6)),
  linear-gradient(90deg, #050419 0, #070420 250px, #04020f 1000px, #000 1500px);
  font-family: "Roboto Condensed", Roboto, sans-serif; font-stretch: 75%; }
.wrap { width: 1399px; margin: 11px 0 0 228px; }
.hero { height: 135px; display: flex; justify-content: space-between; }
h1, h2, h3, p, ul { margin: 0; padding: 0; font-weight: 400; list-style: none; }
h1 { font-size: 45px; line-height: 50px; color: #4ade80; font-weight: 300; letter-spacing: -1.100px; }
h1 b { font-weight: 700; text-shadow: 0 0 10px rgba(74,222,128,.6); }
.hero p { font-size: 20px; line-height: 30px; color: #9ca3af; margin-top: 4px; }
.status { margin: 16px -1px 0 0; width: 152px; height: 52px; line-height: 52px; text-align: center; border: 1px solid #22634a; border-radius: 10px; background: #111827; color: #4ade80; font-size: 17.600px; box-shadow: 0 0 25px rgba(54,200,80,.45); white-space: nowrap; }
.cols { display: flex; gap: 32px; margin-left: 1px; }
.card { height: 900px; border: 1.500px solid transparent; border-radius: 16px; padding: 30px 29px; }
.req { width: 921px; background: linear-gradient(100deg, #0a1024, #0b0e1d 80%) padding-box, linear-gradient(110deg, #3fb873 0, #2f9a60 45%, #205f45 100%) border-box; }
.ex { width: 445px; border-left-width: 2.500px; padding-left: 28px; background: linear-gradient(100deg, #0b0f1e, #090c16 90%) padding-box, linear-gradient(100deg, #3fb873 0, #2f9a60 45%, #205f45 100%) border-box; }
.head { display: flex; justify-content: space-between; align-items: center; height: 35px; margin-bottom: 19px; }
.head svg { margin: -3px 2px 0 0; }
h2 { font-size: 25px; font-weight: 700; color: #4ade80; }
.live { display: flex; align-items: center; gap: 10px; font-size: 15px; color: #9ca3af; margin-top: -2px; }
.live i { width: 15px; height: 15px; border-radius: 50%; background: #3fb06b; }
label, h3 { display: block; font-size: 17.500px; font-weight: 500; line-height: 25px; padding-top: 1px; color: #4ade80; }
label { margin-bottom: 4px; }
.big label { margin-bottom: 3px; }
small { font-size: 15px; color: #9ca3af; margin-left: 5px; }
.field { margin-bottom: 20px; }
.big { margin-bottom: 23px; }
.holder { position: relative; }
.box { display: block; width: 100%; height: 52px; margin: 0; border: 1px solid #333a4a; border-radius: 10px; background: #101624; color: #e5e7eb; font: inherit; font-family: "Roboto Condensed", Roboto, sans-serif; font-stretch: 75%; font-size: 20px; padding: 0 20px; appearance: none; outline: 0; }
.box::placeholder { color: #8f95a3; opacity: 1; }
.link { position: absolute; right: 17px; top: 15px; }
.two { display: flex; gap: 20px; }
.two .field { flex: 1; }
.area { font-family: "Noto Sans Mono", "DejaVu Sans Mono", monospace; font-stretch: normal; font-size: 17.500px; line-height: 25px; padding: 11px 20px; resize: none; }
.a1 { height: 97px; } .a2 { height: 147px; }
.grip { position: absolute; right: 1px; bottom: 1px; }
.field + .send { display: block; width: 100%; height: 57px; margin-top: 33px; border: 1px solid #1d5c42; border-radius: 10px; background: #0d2126; color: #4ade80; font-family: "Roboto Condensed", Roboto, sans-serif; font-stretch: 75%; font-size: 17.500px; font-weight: 700; letter-spacing: .87px; padding-top: 2px; }
.ex li { display: flex; align-items: center; height: 35px; font-size: 17.500px; color: #d1d5db; }
.ex h3 + ul { margin-top: -1px; }
.arrows svg { margin: 3px 10px 0 0; }
.ex hr { border: 0; border-top: 1px solid #1e2534; margin: 15px 0 20px; }
.ex .dots { padding-top: 1px; }
.dots i { width: 4px; height: 4px; border-radius: 50%; background: #4ade80; margin: 0 11px 3px 1px; }
code { font-family: "Noto Sans Mono", "DejaVu Sans Mono", monospace; font-stretch: normal; font-size: 17.500px; line-height: 20px; background: #1f2937; border-radius: 5px; padding: 0 5px; }

.scroll { position: absolute; left: 1914px; top: 190px; width: 2px; height: 857px; background: #8f8f94; }

/* dock */
.dock { position: absolute; left: 65px; top: 1001px; width: 1790px; height: 78px; border: 1px solid #34343f; border-radius: 26px; background: linear-gradient(rgba(6,8,24,.78), rgba(3,2,12,.97) 70%); backdrop-filter: blur(12px); display: flex; gap: 13.390px; padding: 11px 0 0 11px; }
.dock > svg { width: 49px; height: 49px; overflow: visible; }
.sep { width: 18px; height: 61px; margin-top: -4px; background: linear-gradient(#55565f, #55565f) center / 1px 100% no-repeat; }
.s3 { width: 20px; }
.dock .trash { width: 44px; height: 58px; margin: -5px 0 0 1px; }
.cal { font: 700 11px "Open Sans", sans-serif; font-stretch: 80%; fill: #fff; }
.clk { font: 700 7px "Roboto", sans-serif; fill: #333; }
.pyc { font: 700 13px "DejaVu Sans", sans-serif; fill: #fff; }
.th { font: 400 28px "Open Sans", sans-serif; font-stretch: 80%; fill: #eee; stroke: #333; stroke-width: 1px; }
.off { font: 700 17px "Open Sans", sans-serif; fill: #fff; } .xl { fill: #12703e; }
```
